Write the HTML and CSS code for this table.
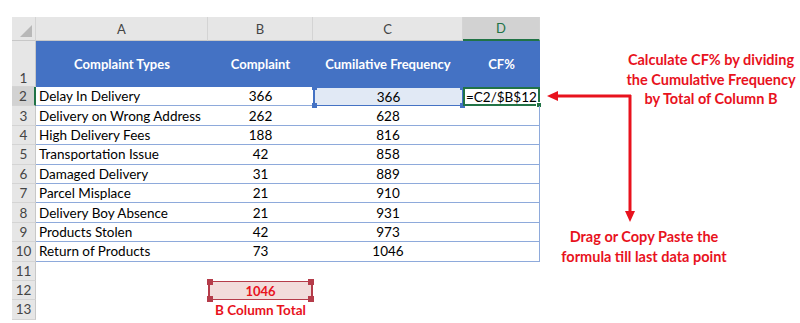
FILE: index.html
```html
<!DOCTYPE html>
<html>
<head>
<meta charset="utf-8">
<link rel="stylesheet" href="styles.css">
</head>
<body>
<div class="page">
  <div class="sheet">
    <div class="corner"><span class="tri"></span></div>
    <div class="colh">A</div>
    <div class="colh">B</div>
    <div class="colh">C</div>
    <div class="colh colh-sel">D</div>

    <div class="rowh rowh-top">1</div>
    <div class="hcell">Complaint Types</div>
    <div class="hcell">Complaint</div>
    <div class="hcell">Cumilative Frequency</div>
    <div class="hcell">CF%</div>

    <div class="rowh rowh-sel">2</div>
    <div class="cell txt">Delay In Delivery</div>
    <div class="cell num">366</div>
    <div class="cell num ref-c">366<i class="h tl"></i><i class="h bl"></i><i class="h tr"></i><i class="h br"></i></div>
    <div class="cell last active">=C2/$B$12<i class="fill"></i></div>

    <div class="rowh">3</div>
    <div class="cell txt">Delivery on Wrong Address</div>
    <div class="cell num">262</div>
    <div class="cell num">628</div>
    <div class="cell last"></div>

    <div class="rowh">4</div>
    <div class="cell txt">High Delivery Fees</div>
    <div class="cell num">188</div>
    <div class="cell num">816</div>
    <div class="cell last"></div>

    <div class="rowh">5</div>
    <div class="cell txt">Transportation Issue</div>
    <div class="cell num">42</div>
    <div class="cell num">858</div>
    <div class="cell last"></div>

    <div class="rowh">6</div>
    <div class="cell txt">Damaged Delivery</div>
    <div class="cell num">31</div>
    <div class="cell num">889</div>
    <div class="cell last"></div>

    <div class="rowh">7</div>
    <div class="cell txt">Parcel Misplace</div>
    <div class="cell num">21</div>
    <div class="cell num">910</div>
    <div class="cell last"></div>

    <div class="rowh">8</div>
    <div class="cell txt">Delivery Boy Absence</div>
    <div class="cell num">21</div>
    <div class="cell num">931</div>
    <div class="cell last"></div>

    <div class="rowh">9</div>
    <div class="cell txt">Products Stolen</div>
    <div class="cell num">42</div>
    <div class="cell num">973</div>
    <div class="cell last"></div>

    <div class="rowh">10</div>
    <div class="cell txt">Return of Products</div>
    <div class="cell num">73</div>
    <div class="cell num">1046</div>
    <div class="cell last"></div>

    <div class="rowh">11</div>
    <div class="blank"></div><div class="blank"></div><div class="blank"></div><div class="blank"></div>

    <div class="rowh">12</div>
    <div class="blank"></div>
    <div class="blank total-wrap"><div class="total">1046<i class="h tl"></i><i class="h bl"></i><i class="h tr"></i><i class="h br"></i></div></div>
    <div class="blank"></div><div class="blank"></div>

    <div class="rowh">13</div>
    <div class="blank"></div>
    <div class="blank caption">B Column Total</div>
    <div class="blank"></div><div class="blank"></div>
  </div>

  <div class="note note-top">Calculate CF% by dividing<br>the Cumulative Frequency<br>by Total of Column B</div>
  <div class="note note-bottom">Drag or Copy Paste the<br>formula till last data point</div>

  <svg class="arrows" width="800" height="323" viewBox="0 0 800 323">
    <path d="M631 96 H556" stroke="#e8121d" stroke-width="3" fill="none"/>
    <polygon points="547,96 558,91 558,101" fill="#e8121d"/>
    <path d="M630 95 V212" stroke="#e8121d" stroke-width="3" fill="none"/>
    <polygon points="630,222 625,211 635,211" fill="#e8121d"/>
  </svg>
</div>
</body>
</html>
```

FILE: styles.css
```css
* { box-sizing: border-box; }
html, body { margin: 0; padding: 0; background: #fff; }
body {
  font-family: Lato, "Open Sans", "Liberation Sans", sans-serif;
  font-size: 13.5px;
  color: #000;
}
.page {
  position: relative;
  width: 800px;
  height: 323px;
  overflow: hidden;
  padding: 17px 0 0 12px;
}
.sheet {
  display: grid;
  grid-template-columns: 24px 172px 105px 150px 77px;
  grid-template-rows: 24px 46px repeat(12, 19.4px);
  width: 528px;
}
.corner {
  position: relative;
  background: #e6e6e6;
  border-right: 1px solid #d4d4d4;
  border-bottom: 1px solid #c8c8c8;
}
.tri {
  position: absolute;
  right: 3px;
  bottom: 3px;
  width: 0; height: 0;
  border-left: 12px solid transparent;
  border-bottom: 12px solid #b8b8b8;
}
.colh {
  background: #e6e6e6;
  border-right: 1px solid #d4d4d4;
  border-bottom: 1px solid #c8c8c8;
  color: #444;
  font-size: 13px;
  display: flex;
  align-items: center;
  justify-content: center;
}
.colh-sel {
  background: #d2d2d2;
  border-bottom: 2px solid #217346;
  color: #217346;
}
.rowh {
  background: #e6e6e6;
  border-bottom: 1px solid #d4d4d4;
  border-right: 1px solid #c8c8c8;
  color: #444;
  font-size: 13.5px;
  display: flex;
  align-items: center;
  justify-content: center;
}
.rowh-top { align-items: flex-end; padding-bottom: 0; }
.rowh-sel {
  background: #d2d2d2;
  border-right: 2px solid #217346;
}
.hcell {
  background: #4472c4;
  color: #fff;
  font-weight: bold;
  font-size: 13px;
  display: flex;
  align-items: center;
  justify-content: center;
  padding-bottom: 0;
}
.cell {
  border-bottom: 1px solid #8eaadb;
  display: flex;
  align-items: center;
  white-space: nowrap;
  position: relative;
}
.txt { padding-left: 3px; }
.num { justify-content: center; }
.last { border-right: 1px solid #8eaadb; }
.ref-c {
  background: #e1e9f5;
  border: 1px solid #4472c4;
  border-left: 2px solid #4472c4;
}
.h {
  position: absolute;
  width: 5px; height: 5px;
  background: #4472c4;
}
.tl { left: -3px; top: -3px; }
.bl { left: -3px; bottom: -3px; }
.tr { right: -3px; top: -3px; }
.br { right: -3px; bottom: -3px; }
.active {
  border: 2px solid #217346;
  padding-left: 1px;
  background: #fff;
}
.fill {
  position: absolute;
  right: -4px; bottom: -4px;
  width: 6px; height: 6px;
  background: #217346;
  border: 1px solid #fff;
}
.blank { position: relative; }
.total-wrap { padding: 0; }
.total {
  position: relative;
  height: 100%;
  background: #f2dcdb;
  border: 2px solid #b53c4a;
  border-top-width: 1px;
  border-bottom-width: 1px;
  color: #e8121d;
  font-weight: bold;
  font-size: 13px;
  display: flex;
  align-items: center;
  justify-content: center;
}
.total .h { background: #b53c4a; width: 6px; height: 6px; }
.caption {
  color: #e8121d;
  font-weight: bold;
  font-size: 13.5px;
  display: flex;
  align-items: center;
  justify-content: center;
  white-space: nowrap;
}
.note {
  position: absolute;
  color: #e8121d;
  font-weight: bold;
  font-size: 14.5px;
  line-height: 19.5px;
  text-align: center;
  white-space: nowrap;
}
.note-top { left: 621px; top: 50px; width: 180px; }
.note-bottom { left: 554px; top: 227px; width: 180px; }
.arrows { position: absolute; left: 0; top: 0; pointer-events: none; }
```
